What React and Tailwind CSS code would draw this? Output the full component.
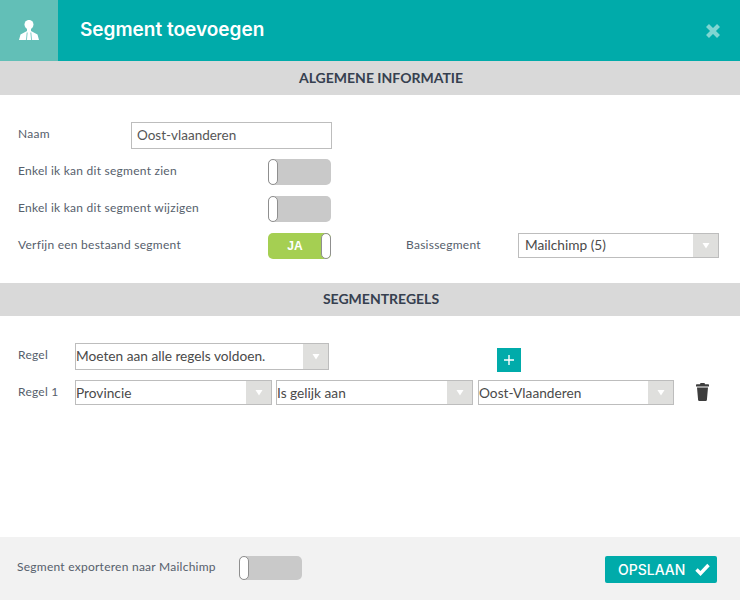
const sans = "font-['Lato','Open_Sans',sans-serif]";

function Select({ value, className, h = "h-[25px]", text = "pl-0" }) {
  return (
    <div className={`flex items-stretch border border-[#bdbdbd] bg-white ${h} ${className}`}>
      <span className={`flex-1 flex items-center text-[13.7px] text-[#4a4a4a] whitespace-nowrap overflow-hidden ${text}`}>{value}</span>
      <span className="w-[25px] bg-[#dfdfdd] flex items-center justify-center">
        <svg width="8" height="7" viewBox="0 0 8 7"><path d="M0.5 1h7L4 6.500z" fill="#ffffff" /></svg>
      </span>
    </div>
  );
}

function Toggle({ on, h = "h-[26px]" }) {
  if (on) {
    return (
      <div className={`w-[63px] ${h} rounded-[5px] bg-[#a5cf52] flex items-center`}>
        <span className="w-[54px] text-center text-[12px] font-bold text-white font-['Liberation_Sans',sans-serif]">JA</span>
        <span className={`w-[10px] ${h} -ml-px rounded-[5px] bg-white border border-[#8f8f8f]`} />
      </div>
    );
  }
  return (
    <div className={`w-[63px] ${h} rounded-[5px] bg-[#c9c9c9] flex`}>
      <span className={`w-[10px] ${h} rounded-[5px] bg-white border border-[#8f8f8f]`} />
    </div>
  );
}

function Section({ children, h = "h-[33px]" }) {
  return (
    <div className={`${h} shrink-0 bg-[#d9d9d9] flex items-center justify-center pl-[22px] pb-[2px] text-[14px] font-bold text-[#36404f]`}>
      {children}
    </div>
  );
}

function Label({ children, className = "" }) {
  return <span className={`text-[12px] tracking-[0.25px] text-[#56606c] whitespace-nowrap ${className}`}>{children}</span>;
}

function ToggleRow({ label, on, children }) {
  return (
    <div className="flex items-center h-[26px]">
      <Label className="w-[250px] -mt-[2px]">{label}</Label>
      <Toggle on={on} />
      {children}
    </div>
  );
}

export default function App() {
  return (
    <div className={`w-[740px] h-[600px] bg-white flex flex-col overflow-hidden ${sans}`}>
      <header className="h-[61px] bg-[#00abaa] flex items-center shrink-0">
        <div className="w-[58px] h-full bg-[#62bfb7] flex items-center justify-center">
          <svg className="-mt-[1px]" width="20" height="20" viewBox="0 0 20 20" fill="#ffffff">
            <ellipse cx="10" cy="4.600" rx="4.500" ry="4.700" />
            <path d="M8 8h4v3l6.500 3.500L20 20H0l1.500-5.500L8 11z" />
            <path d="M8.200 12.500L7.400 20M11.800 12.500l.8 7.500" stroke="#62bfb7" strokeWidth="0.8" fill="none" />
          </svg>
        </div>
        <h1 className="ml-[22px] flex-1 text-[19px] font-semibold text-white font-['Inter',sans-serif]">Segment toevoegen</h1>
        <svg className="mr-[19px]" width="16" height="16" viewBox="0 0 16 16">
          <path d="M2.500 2.500l11 11M13.500 2.500l-11 11" stroke="#7fd6d2" strokeWidth="4.200" />
        </svg>
      </header>

      <Section h="h-[34px]">ALGEMENE INFORMATIE</Section>

      <section className="pl-[18px] pr-[21px] pt-[27px] h-[188px] shrink-0 flex flex-col gap-[11px]">
        <div className="flex items-center h-[27px] -mb-px">
          <Label className="w-[113px] -mt-[3px]">Naam</Label>
          <div className="w-[201px] h-[27px] border border-[#bdbdbd] flex items-center pl-[5px] text-[13.5px] text-[#565656]">
            Oost-vlaanderen
          </div>
        </div>
        <ToggleRow label="Enkel ik kan dit segment zien" />
        <ToggleRow label="Enkel ik kan dit segment wijzigen" />
        <ToggleRow label="Verfijn een bestaand segment" on>
          <Label className="ml-[75px] w-[112px] -mt-[2px]">Basissegment</Label>
          <Select value="Mailchimp (5)" className="w-[201px] -mt-[1px]" text="pl-[6px]" />
        </ToggleRow>
      </section>

      <Section>SEGMENTREGELS</Section>

      <section className="flex-1 pl-[18px] pt-[27px] flex flex-col gap-[10px]">
        <div className="flex items-center h-[27px]">
          <Label className="w-[57px] -mt-[3px]">Regel</Label>
          <Select value="Moeten aan alle regels voldoen." className="w-[254px]" h="h-[27px]" />
          <button className="ml-[168px] mt-[6px] w-[24px] h-[24px] bg-[#00abaa] flex items-center justify-center">
            <svg width="10" height="10" viewBox="0 0 10 10"><path d="M5 0v10M0 5h10" stroke="#ffffff" strokeWidth="1.400" /></svg>
          </button>
        </div>
        <div className="flex items-center h-[25px]">
          <Label className="w-[57px] -mt-[1px]">Regel 1</Label>
          <Select value="Provincie" className="w-[197px]" text="pt-[1px]" />
          <Select value="Is gelijk aan" className="w-[197px] ml-[4px]" text="pt-[1px]" />
          <Select value="Oost-Vlaanderen" className="w-[196px] ml-[5px]" text="pt-[1px]" />
          <svg className="ml-[22px] -mt-[1px]" width="13" height="18" viewBox="0 0 13 18" fill="#3d3d3d">
            <path d="M4.500 0h4l.5 1.200h3.300c.4 0 .7.3.7.7V3.400H0V1.900c0-.4.3-.7.7-.7H4zM1 4.600h11L10.900 17c-.1.600-.5 1-1.100 1H3.200c-.6 0-1-.4-1.100-1z" />
          </svg>
        </div>
      </section>

      <footer className="h-[63px] shrink-0 bg-[#f2f2f2] pl-[17px] pr-[23px] flex items-center">
        <Label className="w-[222px] -mt-[3px]">Segment exporteren naar Mailchimp</Label>
        <div className="-mt-[2px]"><Toggle h="h-[24px]" /></div>
        <button className="ml-auto mt-[2px] w-[112px] h-[27px] rounded-[2px] bg-[#00abaa] flex items-center pl-[13px] gap-[10px] text-[14px] font-medium text-white font-['Inter',sans-serif]">
          OPSLAAN
          <svg width="15" height="13" viewBox="0 0 15 13"><path d="M1.500 6.500l4 4L13.500 2" fill="none" stroke="#ffffff" strokeWidth="3.400" /></svg>
        </button>
      </footer>
    </div>
  );
}
